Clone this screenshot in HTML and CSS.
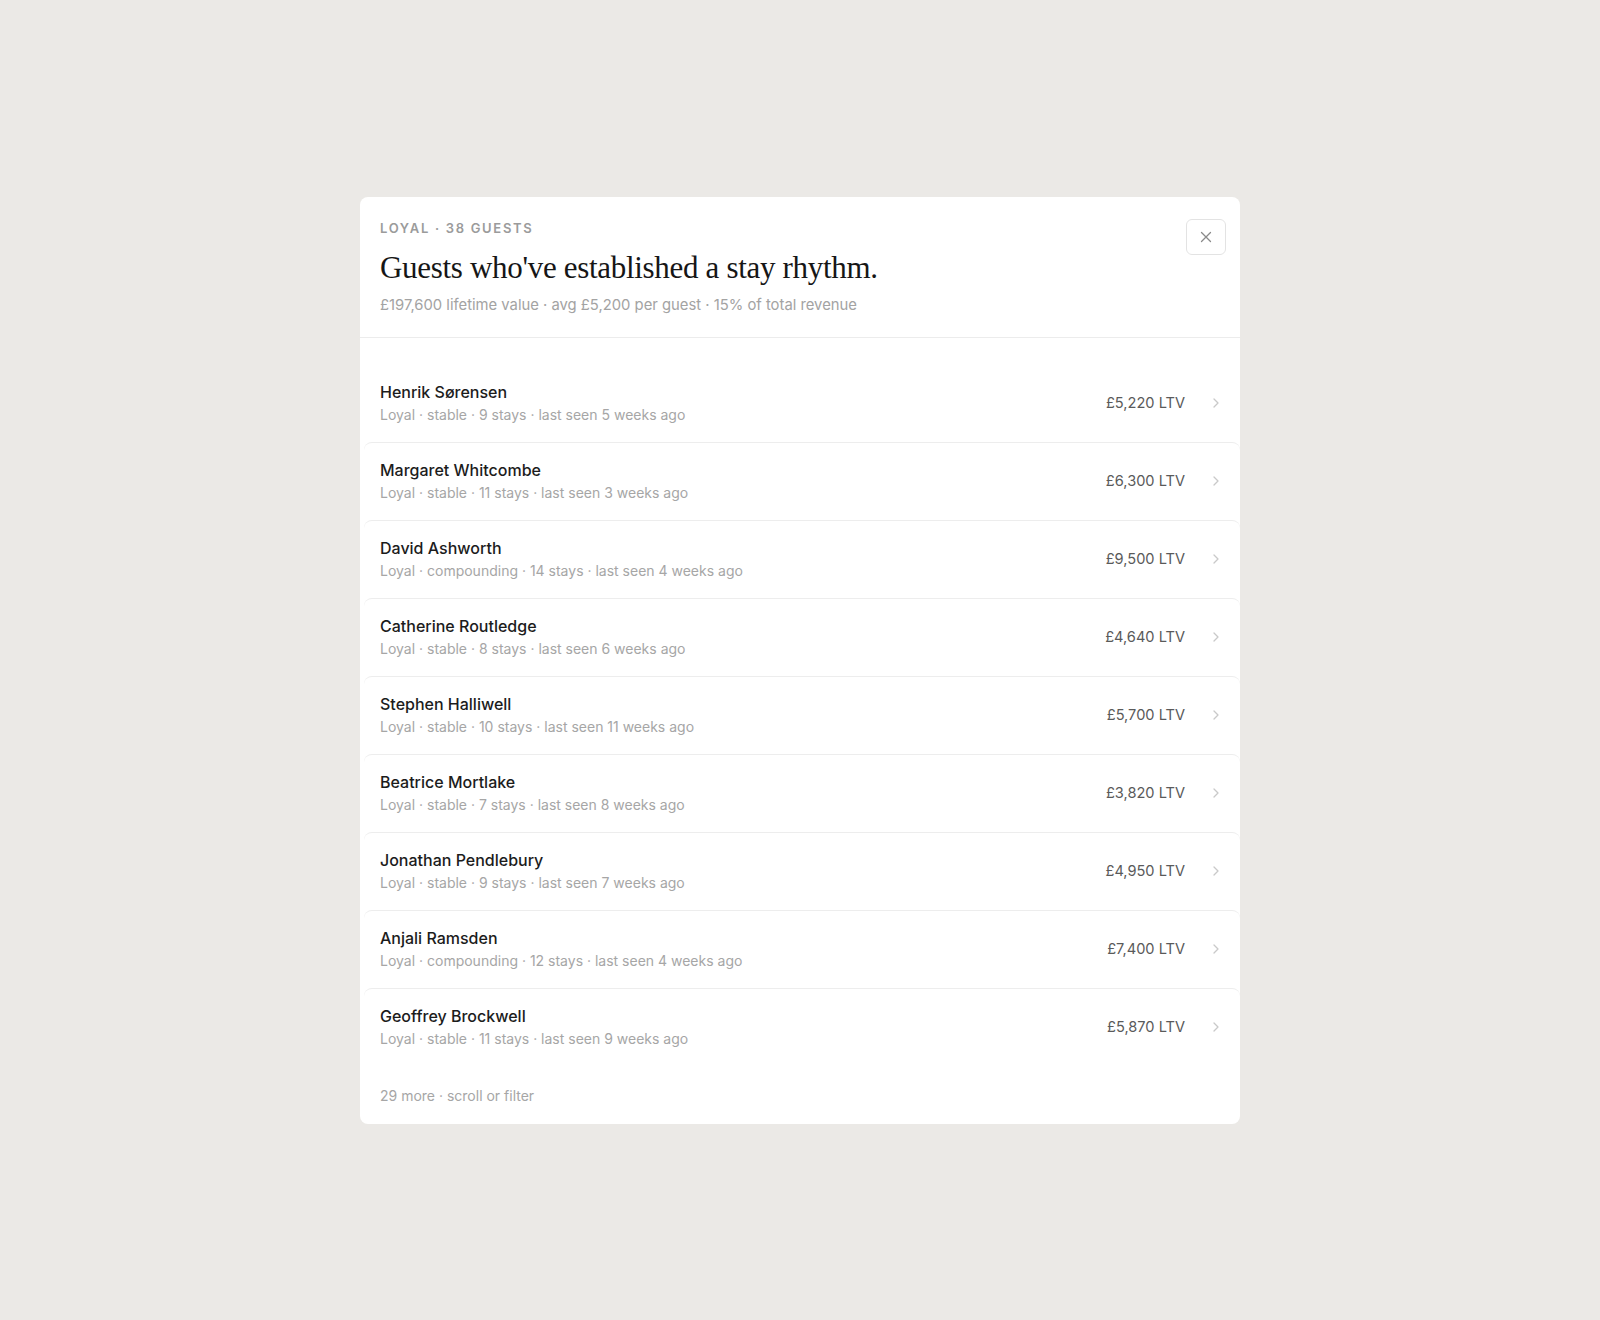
FILE: index.html
```html
<!DOCTYPE html>
<html lang="en">
<head>
  <meta charset="UTF-8">
  <meta name="viewport" content="width=device-width, initial-scale=1.0">
  <title>Loyal guests</title>
  <link rel="stylesheet" href="styles.css">
</head>
<body>
  <div class="backdrop">
    <section class="modal">
      <header class="modal-head">
        <div class="head-text">
          <p class="eyebrow">Loyal · 38 guests</p>
          <h1 class="title">Guests who've established a stay rhythm.</h1>
          <p class="summary">£197,600 lifetime value · avg £5,200 per guest · 15% of total revenue</p>
        </div>
        <button class="close-btn" aria-label="Close">
          <svg width="12" height="12" viewBox="0 0 12 12"><path d="M1.5 1.5l9 9M10.5 1.5l-9 9" stroke="#8a8a8a" stroke-width="1.3" stroke-linecap="round"/></svg>
        </button>
      </header>

      <ul class="guest-list">
        <li class="guest">
          <div class="guest-info">
            <p class="guest-name">Henrik Sørensen</p>
            <p class="guest-meta">Loyal · stable · 9 stays · last seen 5 weeks ago</p>
          </div>
          <span class="guest-ltv">£5,220 LTV</span>
          <svg class="chev" width="16" height="16" viewBox="0 0 16 16"><path d="M6 4l4 4-4 4" fill="none" stroke="#c9c9c9" stroke-width="1.3" stroke-linecap="round" stroke-linejoin="round"/></svg>
        </li>
        <li class="guest">
          <div class="guest-info">
            <p class="guest-name">Margaret Whitcombe</p>
            <p class="guest-meta">Loyal · stable · 11 stays · last seen 3 weeks ago</p>
          </div>
          <span class="guest-ltv">£6,300 LTV</span>
          <svg class="chev" width="16" height="16" viewBox="0 0 16 16"><path d="M6 4l4 4-4 4" fill="none" stroke="#c9c9c9" stroke-width="1.3" stroke-linecap="round" stroke-linejoin="round"/></svg>
        </li>
        <li class="guest">
          <div class="guest-info">
            <p class="guest-name">David Ashworth</p>
            <p class="guest-meta">Loyal · compounding · 14 stays · last seen 4 weeks ago</p>
          </div>
          <span class="guest-ltv">£9,500 LTV</span>
          <svg class="chev" width="16" height="16" viewBox="0 0 16 16"><path d="M6 4l4 4-4 4" fill="none" stroke="#c9c9c9" stroke-width="1.3" stroke-linecap="round" stroke-linejoin="round"/></svg>
        </li>
        <li class="guest">
          <div class="guest-info">
            <p class="guest-name">Catherine Routledge</p>
            <p class="guest-meta">Loyal · stable · 8 stays · last seen 6 weeks ago</p>
          </div>
          <span class="guest-ltv">£4,640 LTV</span>
          <svg class="chev" width="16" height="16" viewBox="0 0 16 16"><path d="M6 4l4 4-4 4" fill="none" stroke="#c9c9c9" stroke-width="1.3" stroke-linecap="round" stroke-linejoin="round"/></svg>
        </li>
        <li class="guest">
          <div class="guest-info">
            <p class="guest-name">Stephen Halliwell</p>
            <p class="guest-meta">Loyal · stable · 10 stays · last seen 11 weeks ago</p>
          </div>
          <span class="guest-ltv">£5,700 LTV</span>
          <svg class="chev" width="16" height="16" viewBox="0 0 16 16"><path d="M6 4l4 4-4 4" fill="none" stroke="#c9c9c9" stroke-width="1.3" stroke-linecap="round" stroke-linejoin="round"/></svg>
        </li>
        <li class="guest">
          <div class="guest-info">
            <p class="guest-name">Beatrice Mortlake</p>
            <p class="guest-meta">Loyal · stable · 7 stays · last seen 8 weeks ago</p>
          </div>
          <span class="guest-ltv">£3,820 LTV</span>
          <svg class="chev" width="16" height="16" viewBox="0 0 16 16"><path d="M6 4l4 4-4 4" fill="none" stroke="#c9c9c9" stroke-width="1.3" stroke-linecap="round" stroke-linejoin="round"/></svg>
        </li>
        <li class="guest">
          <div class="guest-info">
            <p class="guest-name">Jonathan Pendlebury</p>
            <p class="guest-meta">Loyal · stable · 9 stays · last seen 7 weeks ago</p>
          </div>
          <span class="guest-ltv">£4,950 LTV</span>
          <svg class="chev" width="16" height="16" viewBox="0 0 16 16"><path d="M6 4l4 4-4 4" fill="none" stroke="#c9c9c9" stroke-width="1.3" stroke-linecap="round" stroke-linejoin="round"/></svg>
        </li>
        <li class="guest">
          <div class="guest-info">
            <p class="guest-name">Anjali Ramsden</p>
            <p class="guest-meta">Loyal · compounding · 12 stays · last seen 4 weeks ago</p>
          </div>
          <span class="guest-ltv">£7,400 LTV</span>
          <svg class="chev" width="16" height="16" viewBox="0 0 16 16"><path d="M6 4l4 4-4 4" fill="none" stroke="#c9c9c9" stroke-width="1.3" stroke-linecap="round" stroke-linejoin="round"/></svg>
        </li>
        <li class="guest">
          <div class="guest-info">
            <p class="guest-name">Geoffrey Brockwell</p>
            <p class="guest-meta">Loyal · stable · 11 stays · last seen 9 weeks ago</p>
          </div>
          <span class="guest-ltv">£5,870 LTV</span>
          <svg class="chev" width="16" height="16" viewBox="0 0 16 16"><path d="M6 4l4 4-4 4" fill="none" stroke="#c9c9c9" stroke-width="1.3" stroke-linecap="round" stroke-linejoin="round"/></svg>
        </li>
      </ul>

      <footer class="modal-foot">29 more · scroll or filter</footer>
    </section>
  </div>
</body>
</html>
```

FILE: styles.css
```css
body {
  margin: 0;
  background: #ebe9e6;
  font-family: Inter, "Noto Sans", sans-serif;
  color: #1c1c1c;
}
p, h1, ul {
  margin: 0;
  padding: 0;
}
.backdrop {
  min-height: 1320px;
  display: flex;
  align-items: center;
  justify-content: center;
}
.modal {
  width: 880px;
  background: #fff;
  border-radius: 8px;
  overflow: hidden;
}
.modal-head {
  display: flex;
  justify-content: space-between;
  align-items: flex-start;
  padding: 22px 14px 23px 20px;
  border-bottom: 1px solid #ececec;
}
.eyebrow {
  font-size: 13px;
  line-height: 18px;
  font-weight: 600;
  letter-spacing: 0.13em;
  text-transform: uppercase;
  color: #9b9b9b;
}
.title {
  margin-top: 12px;
  font-family: "Liberation Serif", serif;
  font-weight: 400;
  font-size: 31px;
  line-height: 38px;
  letter-spacing: -0.01em;
  color: #161616;
}
.summary {
  margin-top: 9px;
  font-size: 14.8px;
  line-height: 18px;
  color: #a3a3a3;
}
.close-btn {
  width: 40px;
  height: 36px;
  border: 1px solid #e3e3e3;
  border-radius: 6px;
  background: #fff;
  display: flex;
  align-items: center;
  justify-content: center;
  padding: 0;
}
.guest-list {
  list-style: none;
  padding: 26px 0 0 4px;
}
.guest {
  display: flex;
  align-items: center;
  padding: 17px 16px 18px 16px;
  border-top: 1px solid #ededed;
  border-radius: 8px 8px 0 0;
}
.guest:first-child {
  border-top-color: transparent;
}
.guest-info {
  flex: 1;
}
.guest-name {
  font-size: 16px;
  line-height: 20px;
  font-weight: 500;
  color: #1c1c1c;
}
.guest-meta {
  margin-top: 4px;
  font-size: 14px;
  line-height: 18px;
  color: #a6a6a6;
}
.guest-ltv {
  font-size: 14.6px;
  color: #5a5a5a;
}
.chev {
  margin-left: 23px;
}
.modal-foot {
  padding: 21px 20px 19px;
  font-size: 14px;
  line-height: 18px;
  color: #a6a6a6;
}
```
